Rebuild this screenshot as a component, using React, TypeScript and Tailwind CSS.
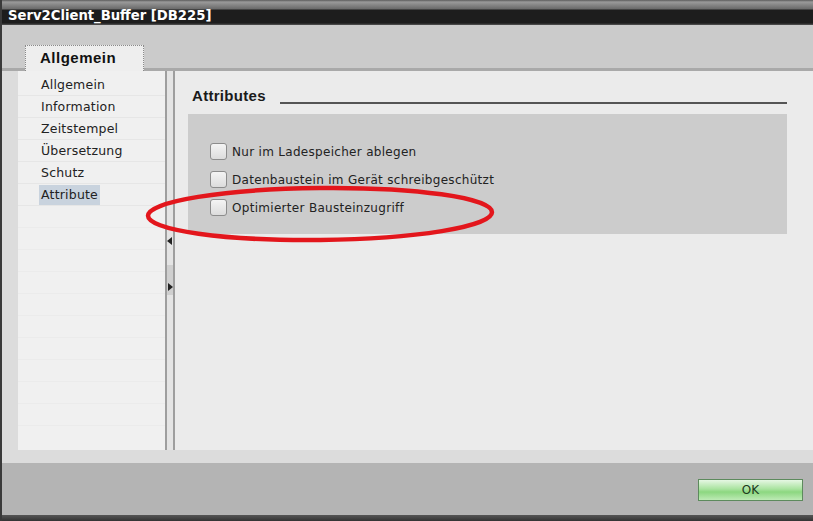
import React from 'react'

const navItems = ['Allgemein', 'Information', 'Zeitstempel', 'Übersetzung', 'Schutz', 'Attribute']

const options = [
  'Nur im Ladespeicher ablegen',
  'Datenbaustein im Gerät schreibgeschützt',
  'Optimierter Bausteinzugriff',
]

function Checkbox() {
  return (
    <div className="w-[17px] h-[17px] rounded-[3px] border border-[#8c8c8c] bg-[linear-gradient(180deg,#f4f4f4_0%,#dcdcdc_100%)] shrink-0" />
  )
}

export default function App() {
  return (
    <div
      className="relative w-[813px] h-[521px] flex flex-col bg-[#cbcbcb] border-l-2 border-[#3a3a3a] overflow-hidden"
      style={{ fontFamily: '"DejaVu Sans", Verdana, sans-serif' }}
    >
      {/* Title bar */}
      <div className="h-[25px] shrink-0 flex items-end pl-[6px] pb-[3px] bg-[linear-gradient(180deg,#5c5c5c_0px,#9a9a9a_2px,#6a6a6a_9px,#1d1d1d_10px,#1d1d1d_23px,#555_25px)]">
        <span className="text-white font-bold text-[13.2px] leading-none">Serv2Client_Buffer [DB225]</span>
      </div>

      {/* Tab strip */}
      <div className="h-[46px] shrink-0 flex items-end pl-[23px] border-b-[3px] border-[#a9a9a9]">
        <div className="w-[119px] h-[26px] -mb-[3px] bg-[#eeeeee] border border-dotted border-b-0 border-[#8a8a8a] flex items-center pl-[14px]">
          <span className="font-bold text-[15px] tracking-[0.5px] text-[#111]" style={{ fontFamily: '"Liberation Sans", Arial, sans-serif' }}>Allgemein</span>
        </div>
      </div>

      {/* Main */}
      <div className="flex-1 flex bg-[#dcdcdc] pl-[16px] pb-[13px]">
        {/* Nav */}
        <div className="w-[147px] bg-[#f0f0f0] pt-[3px]">
          {navItems.map((item) => (
            <div key={item} className="h-[22px] flex items-center border-b border-[#e6e6e6] pl-[21px]">
              <span
                className={
                  'text-[12.5px] tracking-[0.2px] text-[#222] px-[2px] leading-[20px] ' +
                  (item === 'Attribute' ? 'bg-[#c9d3de]' : '')
                }
              >
                {item}
              </span>
            </div>
          ))}
          {Array.from({ length: 10 }).map((_, i) => (
            <div key={i} className="h-[22px] border-b border-[#ebebeb]" />
          ))}
        </div>

        {/* Splitter */}
        <div className="w-[10px] flex flex-col bg-[#e4e4e4] border-l-2 border-r-2 border-[#9e9e9e]">
          <div className="h-[160px]" />
          <div className="h-[20px] flex items-center justify-center">
            <svg width="6" height="8" viewBox="0 0 6 8"><path d="M5 0 L0 4 L5 8 Z" fill="#222" /></svg>
          </div>
          <div className="h-[14px]" />
          <div className="h-[30px] bg-[#cfcfcf] flex items-end justify-center pb-[4px]">
            <svg width="6" height="8" viewBox="0 0 6 8"><path d="M1 0 L6 4 L1 8 Z" fill="#222" /></svg>
          </div>
        </div>

        {/* Content */}
        <div className="flex-1 bg-[#ebebeb] pl-[13px] pr-[26px] pt-[16px]">
          <div className="flex items-end gap-[14px] pl-[4px]">
            <span className="font-bold text-[15px] tracking-[0.3px] text-[#1a1a1a] leading-[18px]" style={{ fontFamily: '"Liberation Sans", Arial, sans-serif' }}>Attributes</span>
            <div className="flex-1 h-[2px] bg-[#555] mb-[1px]" />
          </div>
          <div className="mt-[9px] h-[120px] bg-[#cccccc] pt-[29px] pl-[22px] flex flex-col gap-[11px]">
            {options.map((opt) => (
              <div key={opt} className="flex items-center gap-[5px] h-[17px]">
                <Checkbox />
                <span className="text-[12px] tracking-[0.3px] text-[#222]">{opt}</span>
              </div>
            ))}
          </div>
        </div>
      </div>

      {/* Footer */}
      <div className="h-[52px] shrink-0 bg-[#b4b4b4] flex items-center justify-end pr-[10px] pt-[2px]">
        <button className="w-[105px] h-[22px] border border-[#5d8a5d] bg-[linear-gradient(180deg,#e6f7e3_0%,#a9e39f_45%,#8cd780_60%,#bdeab5_100%)] flex items-center justify-center">
          <span className="text-[12px] text-[#1c3a1c]">OK</span>
        </button>
      </div>
      <div className="h-[6px] shrink-0 bg-[linear-gradient(180deg,#555_0%,#333_100%)]" />

      {/* Red annotation ellipse */}
      <svg className="absolute left-0 top-0 pointer-events-none" width="813" height="521">
        <ellipse cx="318" cy="214" rx="172" ry="26" fill="none" stroke="#e3161c" strokeWidth="4.5" transform="rotate(-0.6 318 214)" />
      </svg>
    </div>
  )
}
